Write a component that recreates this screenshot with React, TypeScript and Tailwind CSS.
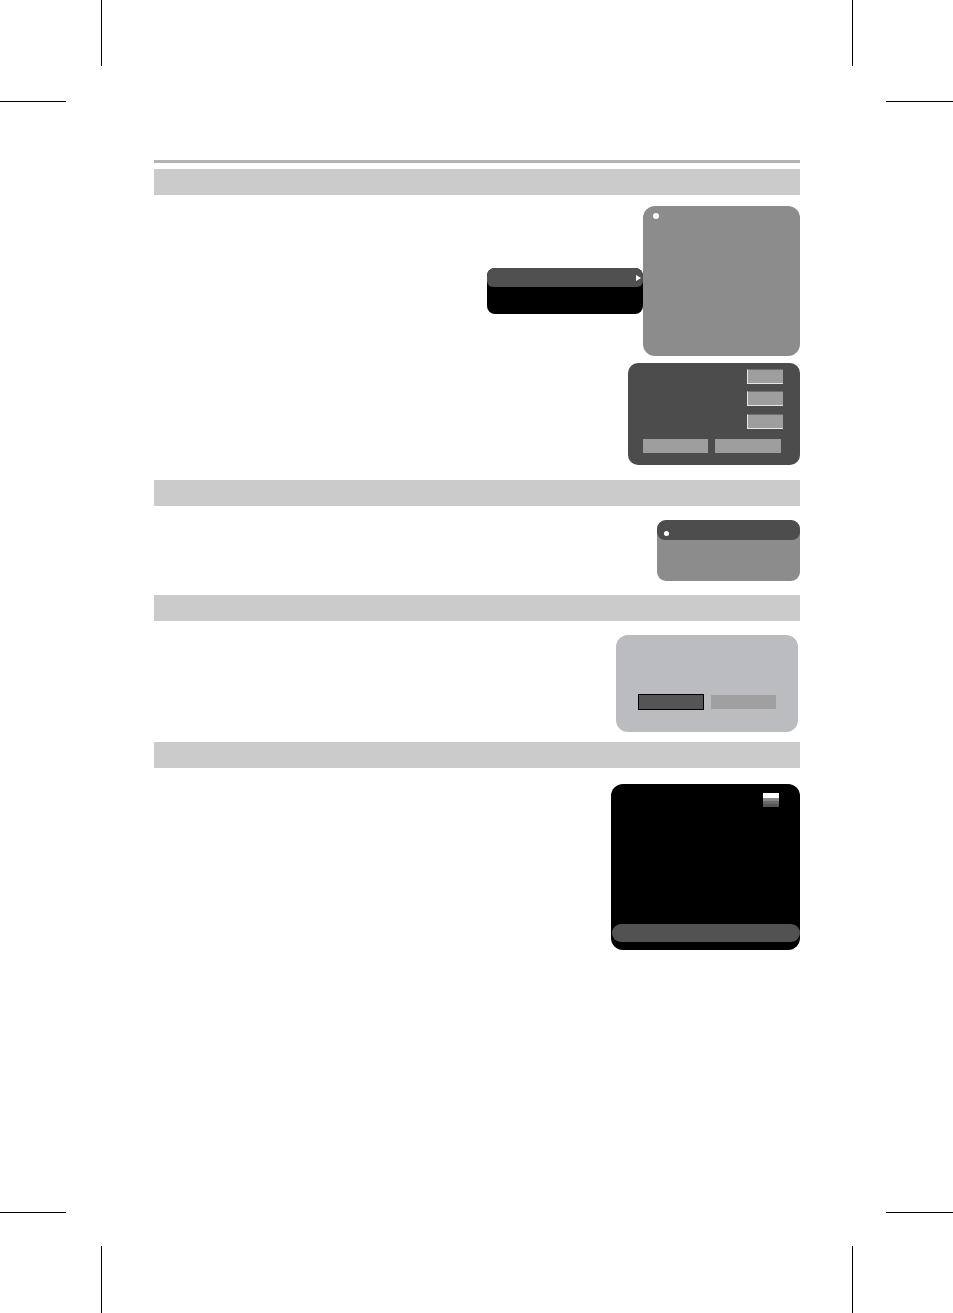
import React from 'react'

function SectionBar() {
  return <div className="h-[26px] w-full bg-[#cbcbcb]" />
}

function Dot() {
  return <div className="h-[6px] w-[6px] rounded-full bg-white" />
}

function SmallBox({ top }: { top: number }) {
  return (
    <div
      className="h-[15px] w-[36px] border-t border-l border-b border-t-[#6f6f6f] border-l-[#e6e6e6] border-b-[#e6e6e6] bg-[#9e9e9e]"
      style={{ marginTop: top }}
    />
  )
}

export default function App() {
  return (
    <div className="flex h-[1313px] w-[953px] flex-col bg-white">
      {/* top crop marks */}
      <div className="flex h-[66px]">
        <div className="ml-[101px] w-px bg-black" />
        <div className="ml-auto mr-[100px] w-px bg-black" />
      </div>
      <div className="mt-[35px] flex">
        <div className="h-px w-[66px] bg-black" />
        <div className="ml-auto h-px w-[67px] bg-black" />
      </div>

      <div className="ml-[154px] mt-[58px] flex w-[646px] flex-col">
        <div className="h-[3px] w-full bg-[#b3b3b3]" />

        {/* section 1 */}
        <div className="mt-[6px]">
          <SectionBar />
        </div>
        <div className="mt-[11px] flex items-start justify-end">
          <div className="mt-[62px] flex h-[46px] w-[156px] flex-col overflow-hidden rounded-[8px] bg-black">
            <div className="flex h-[19px] items-center justify-end rounded-b-[6px] bg-[#505050] pr-[2px]">
              <div className="h-0 w-0 border-y-[3px] border-l-[5px] border-y-transparent border-l-white" />
            </div>
          </div>
          <div className="h-[150px] w-[157px] rounded-[12px] bg-[#8c8c8c] pl-[10px] pt-[7px]">
            <Dot />
          </div>
        </div>
        <div className="mt-[7px] flex justify-end">
          <div className="flex h-[102px] w-[172px] flex-col rounded-[10px] bg-[#4c4c4c]">
            <div className="flex flex-col items-end pr-[17px]">
              <SmallBox top={6} />
              <SmallBox top={7} />
              <SmallBox top={8} />
            </div>
            <div className="ml-[15px] mt-[10px] flex gap-[7px]">
              <div className="h-[14px] w-[65px] bg-[#9e9e9e]" />
              <div className="h-[14px] w-[66px] bg-[#9e9e9e]" />
            </div>
          </div>
        </div>

        {/* section 2 */}
        <div className="mt-[15px]">
          <SectionBar />
        </div>
        <div className="mt-[14px] flex justify-end">
          <div className="flex h-[61px] w-[143px] flex-col overflow-hidden rounded-[9px] bg-[#8c8c8c]">
            <div className="flex h-[20px] items-center rounded-[8px] bg-[#4d4d4d] pl-[7px] pt-[6px]">
              <div className="h-[5px] w-[5px] rounded-full bg-white" />
            </div>
          </div>
        </div>

        {/* section 3 */}
        <div className="mt-[14px]">
          <SectionBar />
        </div>
        <div className="mt-[14px] flex justify-end pr-[2px]">
          <div className="flex h-[97px] w-[182px] flex-col rounded-[12px] bg-[#bbbcbf]">
            <div className="ml-[22px] mt-[59px] flex gap-[7px]">
              <div className="h-[16px] w-[66px] border border-black bg-[#555555]" />
              <div className="mt-px h-[14px] w-[65px] bg-[#a0a0a0]" />
            </div>
          </div>
        </div>

        {/* section 4 */}
        <div className="mt-[10px]">
          <SectionBar />
        </div>
        <div className="mt-[16px] flex justify-end">
          <div className="flex h-[166px] w-[189px] flex-col rounded-[12px] bg-black">
            <div className="mr-[21px] mt-[9px] flex flex-col self-end">
              <div className="h-[5px] w-[16px] bg-white" />
              <div className="h-[3px] w-[16px] bg-[#8a8a8a]" />
              <div className="h-[3px] w-[16px] bg-[#6a6a6a]" />
              <div className="h-[3px] w-[16px] bg-[#555555]" />
            </div>
            <div className="ml-px mt-[117px] h-[18px] w-[188px] rounded-full bg-[#525252]" />
          </div>
        </div>
      </div>

      {/* bottom crop marks */}
      <div className="mt-auto flex flex-col">
        <div className="flex">
          <div className="h-px w-[66px] bg-black" />
          <div className="ml-auto h-px w-[67px] bg-black" />
        </div>
        <div className="mt-[33px] flex h-[67px]">
          <div className="ml-[101px] w-px bg-black" />
          <div className="ml-auto mr-[100px] w-px bg-black" />
        </div>
      </div>
    </div>
  )
}
